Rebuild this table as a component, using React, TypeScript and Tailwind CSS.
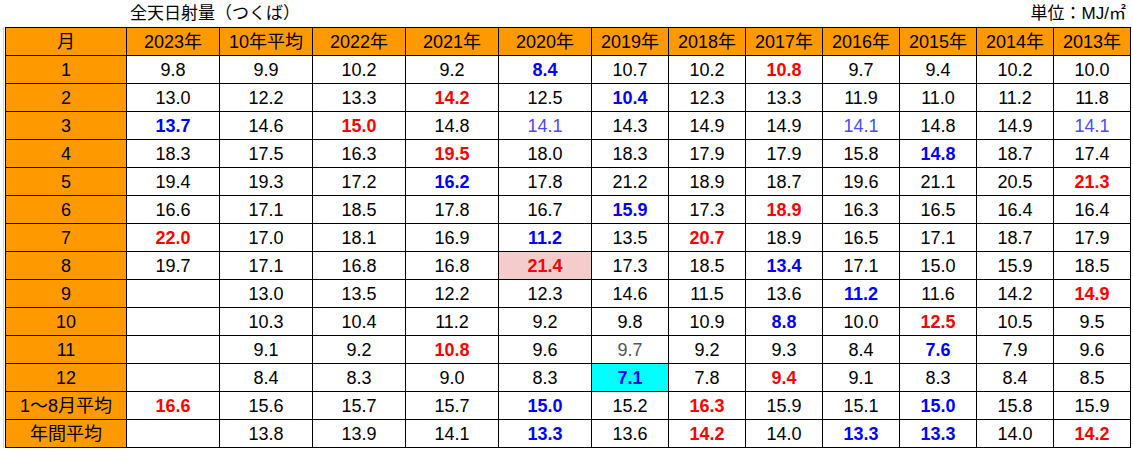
type Tone = 'n' | 'r' | 'b' | 'l' | 'g';

interface Cell {
  text: string;
  tone: Tone;
  bg?: 'pink' | 'cyan';
}

// prefix codes: r = red bold, b = blue bold, l = light blue, g = gray, p/c = pink/cyan fill
const parse = (raw: string): Cell => {
  let s = raw;
  let bg: Cell['bg'];
  if (s.startsWith('p')) {
    bg = 'pink';
    s = s.slice(1);
  } else if (s.startsWith('c')) {
    bg = 'cyan';
    s = s.slice(1);
  }
  const first = s.charAt(0);
  if (first === 'r' || first === 'b' || first === 'l' || first === 'g') {
    return { text: s.slice(1), tone: first, bg };
  }
  return { text: s, tone: 'n', bg };
};

const toneClass: Record<Tone, string> = {
  n: 'text-black',
  r: 'text-[#ff0000] font-bold',
  b: 'text-[#0000ff] font-bold',
  l: 'text-[#4a4aff]',
  g: 'text-[#555555]',
};

const bgClass = {
  pink: 'bg-[#f4cccc]',
  cyan: 'bg-[#00ffff]',
};

const headers = [
  '月', '2023年', '10年平均', '2022年', '2021年', '2020年',
  '2019年', '2018年', '2017年', '2016年', '2015年', '2014年', '2013年',
];

const colWidths = [
  'w-[121px]', 'w-[93px]', 'w-[93px]', 'w-[93px]', 'w-[93px]', 'w-[93px]',
  'w-[77px]', 'w-[77px]', 'w-[77px]', 'w-[77px]', 'w-[77px]', 'w-[77px]', 'w-[77px]',
];

const rows: [string, string[]][] = [
  ['1', ['9.8', '9.9', '10.2', '9.2', 'b8.4', '10.7', '10.2', 'r10.8', '9.7', '9.4', '10.2', '10.0']],
  ['2', ['13.0', '12.2', '13.3', 'r14.2', '12.5', 'b10.4', '12.3', '13.3', '11.9', '11.0', '11.2', '11.8']],
  ['3', ['b13.7', '14.6', 'r15.0', '14.8', 'l14.1', '14.3', '14.9', '14.9', 'l14.1', '14.8', '14.9', 'l14.1']],
  ['4', ['18.3', '17.5', '16.3', 'r19.5', '18.0', '18.3', '17.9', '17.9', '15.8', 'b14.8', '18.7', '17.4']],
  ['5', ['19.4', '19.3', '17.2', 'b16.2', '17.8', '21.2', '18.9', '18.7', '19.6', '21.1', '20.5', 'r21.3']],
  ['6', ['16.6', '17.1', '18.5', '17.8', '16.7', 'b15.9', '17.3', 'r18.9', '16.3', '16.5', '16.4', '16.4']],
  ['7', ['r22.0', '17.0', '18.1', '16.9', 'b11.2', '13.5', 'r20.7', '18.9', '16.5', '17.1', '18.7', '17.9']],
  ['8', ['19.7', '17.1', '16.8', '16.8', 'pr21.4', '17.3', '18.5', 'b13.4', '17.1', '15.0', '15.9', '18.5']],
  ['9', ['', '13.0', '13.5', '12.2', '12.3', '14.6', '11.5', '13.6', 'b11.2', '11.6', '14.2', 'r14.9']],
  ['10', ['', '10.3', '10.4', '11.2', '9.2', '9.8', '10.9', 'b8.8', '10.0', 'r12.5', '10.5', '9.5']],
  ['11', ['', '9.1', '9.2', 'r10.8', '9.6', 'g9.7', '9.2', '9.3', '8.4', 'b7.6', '7.9', '9.6']],
  ['12', ['', '8.4', '8.3', '9.0', '8.3', 'cb7.1', '7.8', 'r9.4', '9.1', '8.3', '8.4', '8.5']],
  ['1～8月平均', ['r16.6', '15.6', '15.7', '15.7', 'b15.0', '15.2', 'r16.3', '15.9', '15.1', 'b15.0', '15.8', '15.9']],
  ['年間平均', ['', '13.8', '13.9', '14.1', 'b13.3', '13.6', 'r14.2', '14.0', 'b13.3', 'b13.3', '14.0', 'r14.2']],
];

export default function App() {
  return (
    <div className="w-[1133px] h-[452px] bg-white font-['Liberation_Sans','Noto_Sans_CJK_JP',sans-serif] text-[18px] leading-none text-black">
      {/* title line */}
      <div className="flex h-[27px] items-center justify-between pl-[130px] pr-[7px] text-[17px]">
        <span className="-mt-[1px]">全天日射量（つくば）</span>
        <span className="-mt-[1px]">単位：MJ/㎡</span>
      </div>

      <div className="ml-[3px] w-[1129px] border-l border-[#d4d4d4] pl-[1px]">
        <table className="table-fixed border-collapse">
          <colgroup>
            {colWidths.map((w, i) => (
              <col key={i} className={w} />
            ))}
          </colgroup>
          <thead>
            <tr>
              {headers.map((h) => (
                <th
                  key={h}
                  className="h-[28px] border border-black bg-[#ff9900] p-0 text-center font-normal"
                >
                  {h}
                </th>
              ))}
            </tr>
          </thead>
          <tbody>
            {rows.map(([label, values]) => (
              <tr key={label}>
                <td className="h-[28px] border border-black bg-[#ff9900] p-0 text-center">
                  {label}
                </td>
                {values.map((raw, i) => {
                  const cell = parse(raw);
                  return (
                    <td
                      key={i}
                      className={`h-[28px] border border-black p-0 text-center ${toneClass[cell.tone]} ${
                        cell.bg ? bgClass[cell.bg] : ''
                      }`}
                    >
                      {cell.text}
                    </td>
                  );
                })}
              </tr>
            ))}
          </tbody>
        </table>
      </div>
    </div>
  );
}
